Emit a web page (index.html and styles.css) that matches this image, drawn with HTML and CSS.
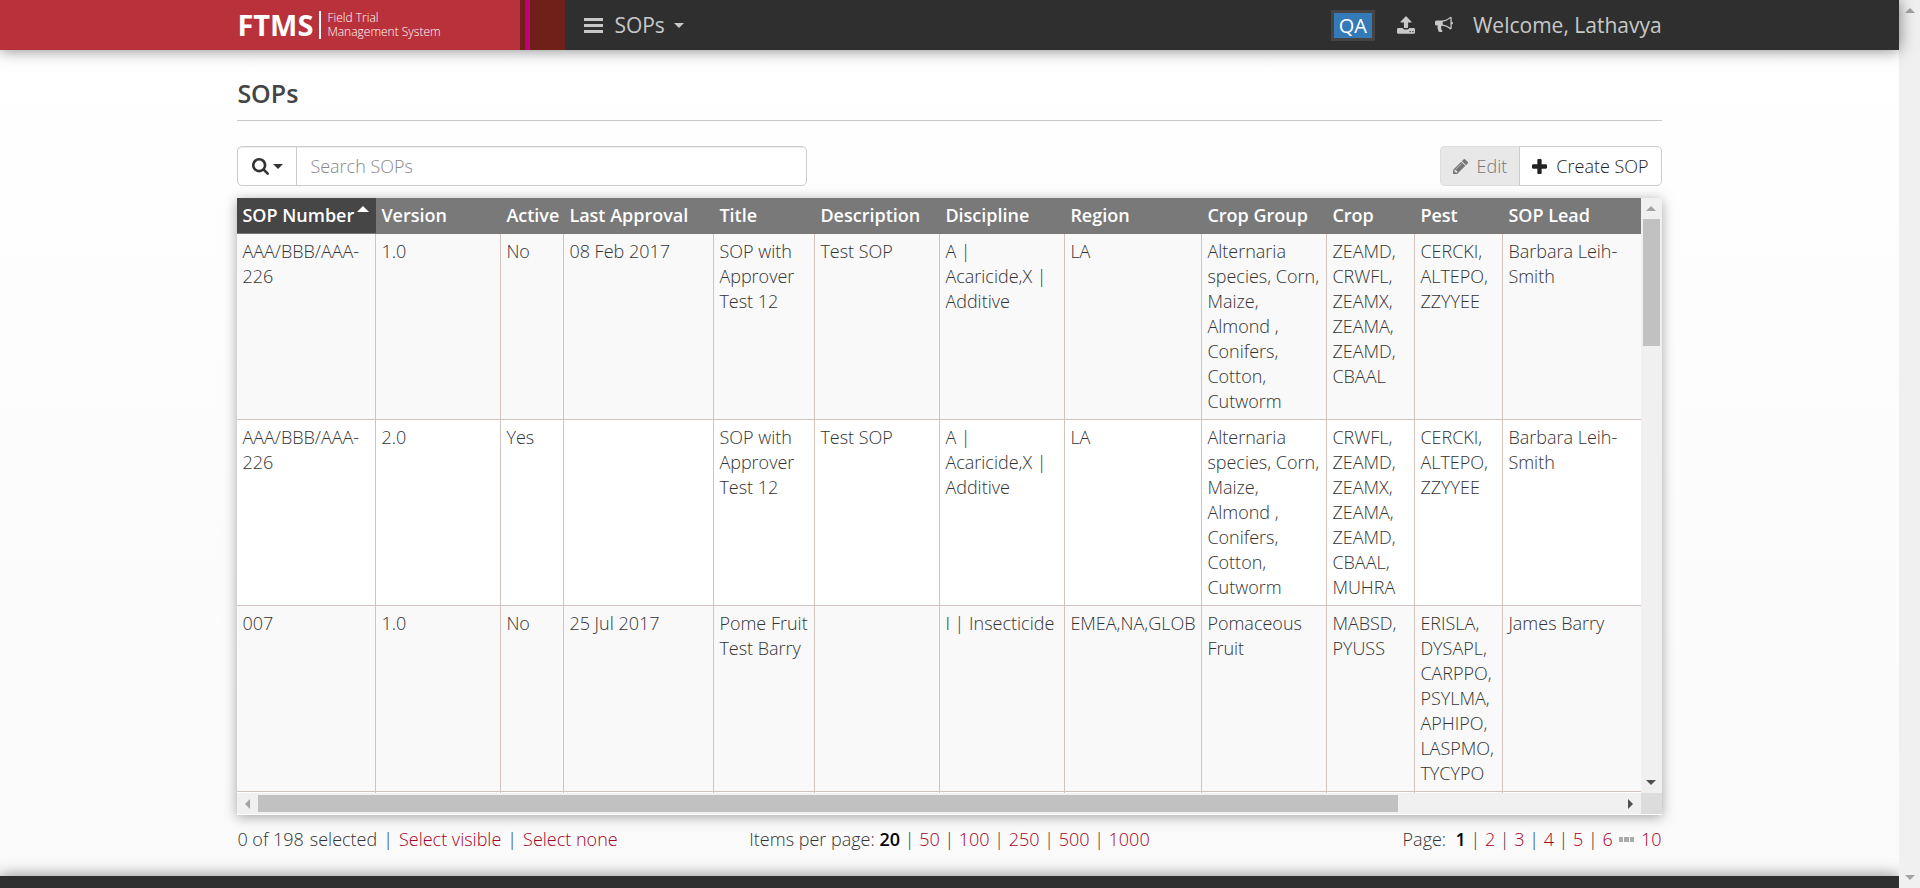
FILE: index.html
```html
<!DOCTYPE html>
<html lang="en">
<head>
<meta charset="utf-8">
<title>FTMS - SOPs</title>
<link rel="stylesheet" href="styles.css">
</head>
<body>
<div class="page">
  <header class="topbar">
    <div class="topbar-stripes" aria-hidden="true"><span class="stripe-red"></span><span class="stripe-brown-thin"></span><span class="stripe-pink"></span><span class="stripe-brown"></span></div>
    <div class="container topbar-inner">
      <a class="brand" href="#"><span class="brand-name">FTMS</span><span class="brand-text">Field Trial<br>Management System</span></a>
      <nav class="main-nav">
        <button class="nav-button" type="button">
          <svg class="icon-menu" viewBox="0 0 19 15" aria-hidden="true"><path d="M0 0h19v3H0zM0 6h19v3H0zM0 12h19v3H0z"/></svg>
          <span>SOPs</span><i class="caret"></i>
        </button>
      </nav>
      <div class="user-nav">
        <span class="env">QA</span>
        <button class="nav-button" type="button" aria-label="Upload"><svg class="icon-nav" viewBox="0 0 1664 1600" aria-hidden="true"><path d="M1280 1408q0-26-19-45t-45-19-45 19-19 45 19 45 45 19 45-19 19-45zm256 0q0-26-19-45t-45-19-45 19-19 45 19 45 45 19 45-19 19-45zm128-224v320q0 40-28 68t-68 28H96q-40 0-68-28t-28-68v-320q0-40 28-68t68-28h427q21 56 70.500 92t110.500 36h256q61 0 110.500-36t70.500-92h427q40 0 68 28t28 68zm-325-648q-17 40-59 40h-256v448q0 26-19 45t-45 19H704q-26 0-45-19t-19-45V576H384q-42 0-59-40-17-39 14-69L787 19q18-19 45-19t45 19l448 448q31 30 14 69z"/></svg></button>
        <button class="nav-button" type="button" aria-label="Announcements"><svg class="icon-nav" viewBox="0 0 1792 1664" aria-hidden="true"><path d="M1664 512q53 0 90.500 37.500T1792 640t-37.500 90.500T1664 768v384q0 52-38 90t-90 38q-417-347-812-380-58 19-91 66t-31 100.500 40 92.500q-20 33-23 65.500t6 58 33.500 55 48 50T768 1434q-29 58-111.500 83t-168.500 11.500-132-55.500q-7-23-29.500-87.500t-32-94.500-23-89-15-101 3.500-98 22-110.500H160q-66 0-113-47T0 736V544q0-66 47-113t113-47h480q435 0 896-384 52 0 90 38t38 90v384zm-128 604V162q-394 302-768 343v270q377 42 768 341z"/></svg></button>
        <a class="welcome" href="#">Welcome, Lathavya</a>
      </div>
    </div>
  </header>

  <main class="container content">
    <h1 class="title">SOPs</h1>
    <div class="toolbar">
      <div class="search">
        <button class="search-type" type="button" aria-label="Search options"><svg class="icon-search" viewBox="0 0 1664 1664" aria-hidden="true"><path d="M1152 704q0-185-131.500-316.500T704 256 387.500 387.500 256 704t131.500 316.500T704 1152t316.500-131.500T1152 704zm512 832q0 52-38 90t-90 38q-54 0-90-38l-343-342q-179 124-399 124-143 0-273.500-55.500t-225-150-150-225T0 704t55.500-273.500 150-225 225-150T704 0t273.500 55.500 225 150 150 225T1408 704q0 220-124 399l343 343q37 37 37 90z"/></svg><i class="caret"></i></button>
        <input class="search-input" type="text" placeholder="Search SOPs" aria-label="Search SOPs">
      </div>
      <div class="actions">
        <button class="action" type="button" disabled><svg class="icon-action" viewBox="0 0 1515 1515" aria-hidden="true"><path d="M363 1387l91-91-235-235-91 91v107h128v128h107zM886 459q0-22-22-22-10 0-17 7l-542 542q-7 7-7 17 0 22 22 22 10 0 17-7l542-542q7-7 7-17zM832 267l416 416-832 832H0v-416zM1515 363q0 53-37 90l-166 166-416-416 165-165q36-38 90-38 53 0 91 38l235 234q37 39 37 91z"/></svg>Edit</button>
        <button class="action" type="button"><svg class="icon-action" viewBox="0 0 14 14" aria-hidden="true"><path d="M5 1a1 1 0 0 1 1-1h2a1 1 0 0 1 1 1v4h4a1 1 0 0 1 1 1v2a1 1 0 0 1-1 1H9v4a1 1 0 0 1-1 1H6a1 1 0 0 1-1-1V9H1a1 1 0 0 1-1-1V6a1 1 0 0 1 1-1h4z"/></svg>Create SOP</button>
      </div>
    </div>

    <section class="grid">
      <div class="grid-view">
        <table class="grid-table">
          <colgroup><col class="c-number"><col class="c-medium"><col class="c-active"><col class="c-wide"><col class="c-title"><col class="c-medium"><col class="c-medium"><col class="c-region"><col class="c-medium"><col class="c-code"><col class="c-code"><col class="c-wide"></colgroup>
          <thead><tr><th class="sorted">SOP Number<i class="sort-up"></i></th><th>Version</th><th>Active</th><th>Last Approval</th><th>Title</th><th>Description</th><th>Discipline</th><th>Region</th><th>Crop Group</th><th>Crop</th><th>Pest</th><th>SOP Lead</th></tr></thead>
          <tbody>
            <tr><td>AAA/BBB/AAA-226</td><td>1.0</td><td>No</td><td>08 Feb 2017</td><td>SOP with Approver Test 12</td><td>Test SOP</td><td>A | Acaricide,X | Additive</td><td>LA</td><td>Alternaria species, Corn, Maize, Almond , Conifers, Cotton, Cutworm</td><td>ZEAMD, CRWFL, ZEAMX, ZEAMA, ZEAMD, CBAAL</td><td>CERCKI, ALTEPO, ZZYYEE</td><td>Barbara Leih-Smith</td></tr>
            <tr><td>AAA/BBB/AAA-226</td><td>2.0</td><td>Yes</td><td></td><td>SOP with Approver Test 12</td><td>Test SOP</td><td>A | Acaricide,X | Additive</td><td>LA</td><td>Alternaria species, Corn, Maize, Almond , Conifers, Cotton, Cutworm</td><td>CRWFL, ZEAMD, ZEAMX, ZEAMA, ZEAMD, CBAAL, MUHRA</td><td>CERCKI, ALTEPO, ZZYYEE</td><td>Barbara Leih-Smith</td></tr>
            <tr><td>007</td><td>1.0</td><td>No</td><td>25 Jul 2017</td><td>Pome Fruit Test Barry</td><td></td><td>I | Insecticide</td><td>EMEA,NA,GLOB</td><td>Pomaceous Fruit</td><td>MABSD, PYUSS</td><td>ERISLA, DYSAPL, CARPPO, PSYLMA, APHIPO, LASPMO, TYCYPO</td><td>James Barry</td></tr>
            <tr><td></td><td></td><td></td><td></td><td></td><td></td><td></td><td></td><td></td><td></td><td></td><td></td></tr>
          </tbody>
        </table>
      </div>
      <div class="bar bar-v" aria-hidden="true"><span class="arrow up dim"></span><span class="track-v"><span class="thumb-v"></span></span><span class="arrow down"></span></div>
      <div class="bar bar-h" aria-hidden="true"><span class="arrow left dim"></span><span class="track-h"><span class="thumb-h"></span></span><span class="arrow right"></span></div>
      <div class="bar-corner" aria-hidden="true"></div>
    </section>

    <div class="pager">
      <div class="selection"><span>0 of 198</span><span>selected</span><span>|</span><a href="#">Select visible</a><span>|</span><a href="#">Select none</a></div>
      <div>Items per page: <b>20</b> | <a href="#">50</a> | <a href="#">100</a> | <a href="#">250</a> | <a href="#">500</a> | <a href="#">1000</a></div>
      <div class="pages">Page: &nbsp;<b>1</b> | <a href="#">2</a> | <a href="#">3</a> | <a href="#">4</a> | <a href="#">5</a> | <a href="#">6</a> <svg class="icon-more" viewBox="0 0 15 5" aria-hidden="true"><path d="M0 0h4v5H0zM5 0h5v5H5zM11 0h4v5h-4z"/></svg> <a href="#">10</a></div>
    </div>
  </main>
  <footer class="footer"></footer>
</div>
<div class="page-bar" aria-hidden="true"><span class="arrow up dim"></span><span class="arrow down dim"></span></div>
</body>
</html>
```
FILE: styles.css
```css
* { box-sizing: border-box; }

body {
  display: flex;
  min-height: 100vh;
  margin: 0;
  color: #333;
  font: 350 18px/25px "Open Sans", sans-serif;
}

button, input { font: inherit; }
button { cursor: pointer; }
a { color: #a50026; text-decoration: none; }

.page {
  display: flex;
  flex: 1;
  flex-direction: column;
  min-width: 0;
  height: 100vh;
  background: linear-gradient(#fff, #fafafa);
}

.container { width: 75%; margin: 0 auto; }

/* Top bar */
.topbar {
  position: relative;
  z-index: 1;
  flex: none;
  background: #2f2f2f;
  box-shadow: 0 0 15px rgba(0, 0, 0, 0.5);
}
.topbar-stripes {
  position: absolute;
  inset: 0 auto 0 0;
  display: flex;
  width: calc(12.5% + 328px);
}
.stripe-red { flex: 1; background: #b9313b; }
.stripe-brown-thin { width: 5px; background: #6f2018; }
.stripe-pink { width: 5px; background: #c1007b; }
.stripe-brown { width: 35px; background: #6f2018; }

.topbar-inner {
  position: relative;
  display: flex;
  align-items: center;
  height: 50px;
}
.brand {
  display: flex;
  align-items: center;
  width: 347px;
  color: #fff;
}
.brand-name {
  padding-right: 6px;
  font-size: 29px;
  font-weight: 700;
  line-height: 50px;
}
.brand-text {
  padding-left: 6px;
  border-left: 2px solid #fff;
  color: #fff;
  font-size: 12px;
  font-weight: 300;
  line-height: 14px;
}
.nav-button {
  display: flex;
  align-items: center;
  padding: 0;
  border: 0;
  background: none;
  color: #c8c8c8;
  font-size: 21px;
  font-weight: 400;
}
.icon-menu { width: 19px; height: 15px; margin-right: 11px; fill: currentColor; }
.caret {
  margin-left: 9px;
  border: 5px solid transparent;
  border-top-color: currentColor;
  border-bottom: 0;
}
.user-nav {
  display: flex;
  align-items: center;
  margin-left: auto;
}
.env {
  margin-right: 22px;
  padding: 0 5px;
  border: 3px solid #444;
  background: #337ab7;
  color: #fff;
  font-size: 20px;
  font-weight: 400;
  line-height: 25px;
}
.icon-nav { width: 18px; height: 18px; margin-right: 20px; fill: currentColor; }
.welcome { color: #c8c8c8; font-size: 21px; font-weight: 400; }

/* Heading and toolbar */
.content {
  display: flex;
  flex: 1;
  flex-direction: column;
  min-height: 0;
}
.title {
  margin: 0 0 25px;
  padding: 27px 0 11px;
  border-bottom: 1px solid #c8c8c8;
  color: #444;
  font-size: 25px;
  font-weight: 600;
  line-height: 32px;
}
.toolbar {
  display: flex;
  justify-content: space-between;
  margin-bottom: 12px;
}
.search {
  display: flex;
  width: 40%;
  height: 40px;
  border: 1px solid #ccc;
  border-radius: 5px;
  background: #fff;
  box-shadow: inset 0 1px 1px rgba(0, 0, 0, 0.07);
}
.search-type {
  display: flex;
  align-items: center;
  justify-content: center;
  width: 59px;
  padding: 0;
  border: 0;
  border-right: 1px solid #ccc;
  background: none;
  color: #333;
}
.search-type .caret { margin-left: 4px; }
.icon-search { width: 17px; height: 17px; fill: currentColor; }
.search-input {
  flex: 1;
  min-width: 0;
  padding: 0 13px;
  border: 0;
  background: none;
  color: #444;
}
.search-input::placeholder { color: #888; }
.actions { display: flex; }
.action {
  display: flex;
  align-items: center;
  gap: 9px;
  height: 40px;
  padding: 0 12px;
  border: 1px solid #ccc;
  border-radius: 0 5px 5px 0;
  background: #fff;
  color: #222;
}
.action:disabled {
  border-color: #ddd;
  border-right: 0;
  border-radius: 5px 0 0 5px;
  background: #e8e8e8;
  color: #777;
}
.icon-action { width: 15px; height: 15px; fill: currentColor; }

/* Data grid */
.grid {
  display: grid;
  flex: 1;
  grid-template-columns: minmax(0, 1fr) 21px;
  grid-template-rows: minmax(0, 1fr) 22px;
  min-height: 0;
  background: #fff;
  box-shadow: 0 2px 12px rgba(0, 0, 0, 0.35);
}
.grid-view { overflow: hidden; }
.grid-table {
  width: 1416px;
  border-collapse: separate;
  border-spacing: 0;
  table-layout: fixed;
}
.c-number { width: 139px; }
.c-medium { width: 125px; }
.c-active { width: 63px; }
.c-wide { width: 150px; }
.c-title { width: 101px; }
.c-region { width: 137px; }
.c-code { width: 88px; }
.grid-table th {
  padding: 5px 0 5px 5px;
  border-bottom: 1px solid #797979;
  background: #797979;
  color: #fff;
  font-weight: 600;
  text-align: left;
  white-space: nowrap;
}
.grid-table .sorted { background: #464646; }
.sort-up {
  display: inline-block;
  margin-left: 3px;
  border: 6px solid transparent;
  border-top: 0;
  border-bottom-color: #fff;
  vertical-align: 10px;
}
.grid-table td {
  height: 186px;
  padding: 5px 4px 5px 5px;
  border-right: 1px solid #d2c3be;
  border-bottom: 1px solid #d2c3be;
  background: #f9f9f9;
  vertical-align: top;
}
.grid-table tr:nth-child(even) td { background: #fff; }

/* Scroll bars */
.bar { display: flex; background: #f0f0f0; }
.bar-v { flex-direction: column; align-items: center; padding: 8px 0; }
.bar-h { align-items: center; padding: 0 8px; border-bottom: 1px solid #fff; }
.bar-corner { border-bottom: 1px solid #fff; background: #dcdcdc; }
.track-v { flex: 1; width: 17px; margin: 8px 0; }
.thumb-v { display: block; height: 23%; background: #c1c1c1; }
.track-h { flex: 1; height: 17px; margin: 0 8px; }
.thumb-h { display: block; width: 83.7%; height: 17px; background: #c1c1c1; }
.arrow { border: 5px solid transparent; color: #505050; }
.dim { color: #a3a3a3; }
.up { border-top: 0; border-bottom-color: currentColor; }
.down { border-bottom: 0; border-top-color: currentColor; }
.left { border-left: 0; border-right-color: currentColor; }
.right { border-right: 0; border-left-color: currentColor; }
.page-bar {
  display: flex;
  flex: none;
  flex-direction: column;
  align-items: center;
  justify-content: space-between;
  width: 21px;
  padding: 8px 0;
  background: #f0f0f0;
}

/* Pager and footer */
.pager {
  display: grid;
  grid-template-columns: 1fr auto 1fr;
  padding: 12px 0 24px;
}
.selection { display: flex; gap: 6px; }
.pager b { color: #000; font-weight: 600; }
.pages { text-align: right; }
.icon-more { width: 15px; height: 5px; margin: 0 2px; fill: #aaa; vertical-align: 4px; }
.footer {
  flex: none;
  height: 12px;
  background: #2f2f2f;
  box-shadow: 0 0 15px rgba(0, 0, 0, 0.5);
}
```
